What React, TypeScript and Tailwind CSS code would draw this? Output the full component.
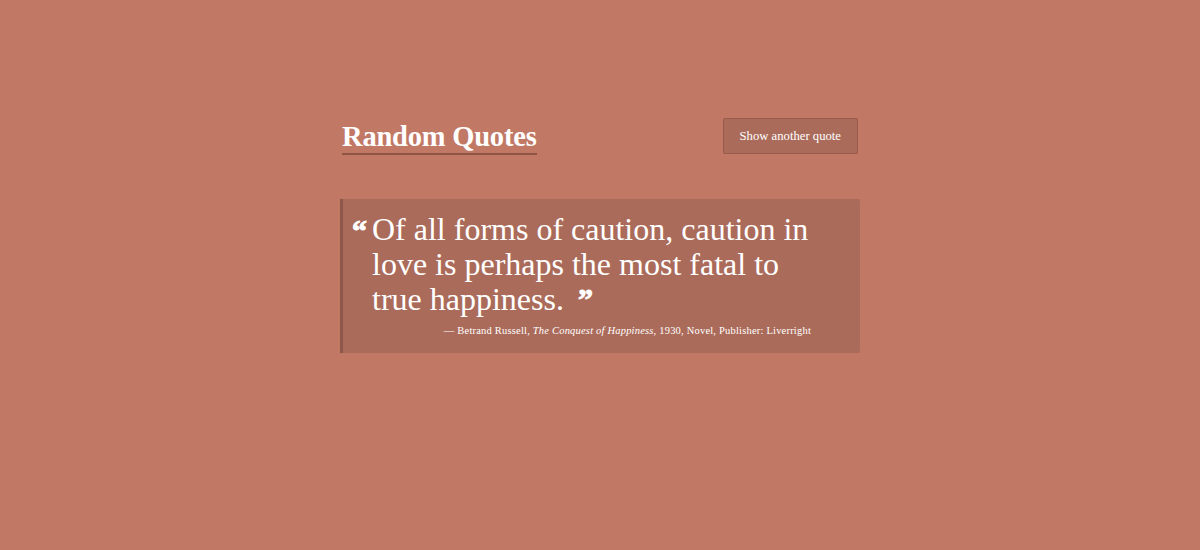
export default function App() {
  return (
    <div className="min-h-[550px] w-full bg-[#c17865] text-white font-['Liberation_Serif',serif]">
      <div className="mx-auto w-[520px] pt-[118px]">
        {/* Header */}
        <div className="flex items-start justify-between">
          <h1 className="mt-[4px] ml-[2px] border-b-2 border-[#8e5445] pb-[1px] text-[28.5px] font-bold leading-[30px] tracking-[-0.2px]">
            Random Quotes
          </h1>
          <button className="mr-[2px] h-[36px] rounded-[2px] border-[1.5px] border-[#9a5a4b] bg-[#ab6b5a] px-[16px] pt-[2px] text-[12.7px]">
            Show another quote
          </button>
        </div>

        {/* Quote */}
        <blockquote className="mt-[44px] h-[154px] rounded-r-[2px] border-l-[3px] border-[#8d5849] bg-[#ab6b5a] pl-[9px] pr-[20px] pt-[13px]">
          <div className="flex">
            <span className="mr-[5px] mt-[6px] text-[30px] font-bold leading-[26px] [-webkit-text-stroke:1px_white]">“</span>
            <p className="w-[445px] text-[32px] leading-[35px]">
              Of all forms of caution, caution in love is perhaps the most fatal to true happiness.
              <span className="ml-[14px] inline-block align-top pt-[4px] text-[30px] font-bold leading-[26px] [-webkit-text-stroke:1px_white]">”</span>
            </p>
          </div>
          <p className="mr-[29px] mt-[6px] text-right text-[10.5px] tracking-[0.2px]">
            — Betrand Russell, <i>The Conquest of Happiness</i>, 1930, Novel, Publisher: Liverright
          </p>
        </blockquote>
      </div>
    </div>
  )
}
